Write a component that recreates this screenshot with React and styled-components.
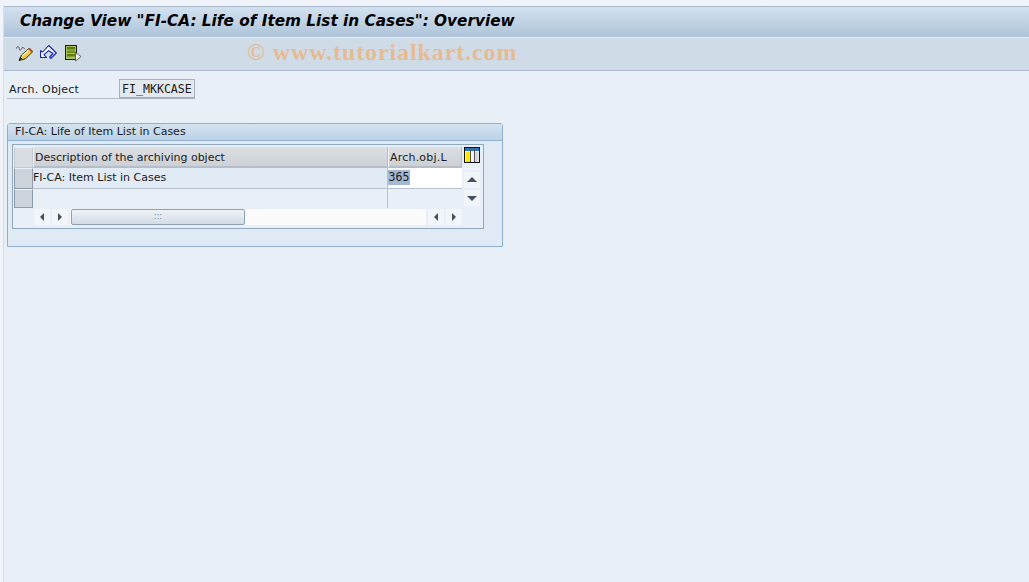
import React from "react"
import styled, { createGlobalStyle } from "styled-components"

const GlobalStyle = createGlobalStyle`
  html, body {
    margin: 0;
    padding: 0;
    height: 100%;
    overflow: hidden;
    background: #f0f4fa;
  }
  #root {
    height: 100%;
  }
`

function PencilIcon() {
  return (
    <svg width="18" height="18" viewBox="0 0 18 18">
      <path d="M0.500 4.500c0-2 2-2.500 2.500-1s0 3 1.500 2.500 1-3 2.500-2.500 1 1.500 2 1" fill="none" stroke="#555" strokeWidth="1" />
      <path d="M3 16.500l2.500-5.500 7.500-6.500 3.500 3.500-7.500 7z" fill="#f4cb3a" stroke="#2a2a2a" strokeWidth="1" strokeLinejoin="round" />
      <path d="M6.500 11.500l6.500-5.500" stroke="#fff3b0" strokeWidth="1.200" />
      <path d="M13 4.500l3.500 3.500" stroke="#c8451c" strokeWidth="2" />
      <path d="M3 16.500l1-3.500 2.500 2z" fill="#222" />
    </svg>
  )
}

function UndoIcon() {
  return (
    <svg width="18" height="18" viewBox="0 0 18 18">
      <path
        d="M0.500 6.700V13.500H6.500L4 10.700 8.700 6.700 13 9.500 9.700 13 10.700 14.500 16.300 9 8.700 1.500 2.700 8z"
        fill="#f6f8ff"
        stroke="#1420b0"
        strokeWidth="1.100"
        strokeLinejoin="round"
      />
    </svg>
  )
}

function ListIcon() {
  return (
    <svg width="18" height="18" viewBox="0 0 18 18">
      <rect x="1.500" y="1.500" width="11" height="14" fill="#a9bf60" stroke="#1c1c1c" />
      <rect x="3" y="3" width="8" height="2.500" fill="#5f7f0c" />
      <rect x="3" y="6.500" width="8" height="2.500" fill="#6f8f14" />
      <rect x="3" y="10" width="8" height="2.500" fill="#5f7f0c" />
      <path d="M11.500 8.500v8.500l5.500-4.500z" fill="#fff" stroke="#444" strokeWidth="0.800" />
    </svg>
  )
}

function ColumnsIcon() {
  return (
    <svg width="16" height="16" viewBox="0 0 16 16">
      <rect x="0.500" y="0.500" width="15" height="15" fill="#eee" stroke="#111" />
      <rect x="1" y="1" width="14" height="3" fill="#1f78c8" />
      <rect x="2" y="5" width="4" height="10" fill="#ffe800" />
      <rect x="7" y="5" width="3" height="10" fill="#f4f4f4" />
      <rect x="11" y="5" width="3" height="10" fill="#d8d8d8" />
      <path d="M6.500 1v14M10.500 1v14" stroke="#555" strokeWidth="1" />
    </svg>
  )
}

function Arrow({ dir }) {
  const points = {
    left: "7,1 7,9 3,5",
    right: "3,1 3,9 7,5",
    up: "0,7 10,7 5,2",
    down: "0,3 10,3 5,8",
  }
  return (
    <svg width="10" height="10" viewBox="0 0 10 10">
      <polygon points={points[dir]} fill="#465160" />
    </svg>
  )
}

export default function App() {
  return (
    <>
      <GlobalStyle />
      <S_Page>
        <S_Window>
          <S_TitleBar>
            <S_Title>Change View "FI-CA: Life of Item List in Cases": Overview</S_Title>
          </S_TitleBar>
          <S_Toolbar>
            <S_ToolButton>
              <PencilIcon />
            </S_ToolButton>
            <S_ToolButton>
              <UndoIcon />
            </S_ToolButton>
            <S_ToolButton>
              <ListIcon />
            </S_ToolButton>
            <S_Watermark>© www.tutorialkart.com</S_Watermark>
          </S_Toolbar>
          <S_Content>
            <S_FieldRow>
              <S_FieldLabel>Arch. Object</S_FieldLabel>
              <S_FieldValue>FI_MKKCASE</S_FieldValue>
            </S_FieldRow>
            <S_Panel>
              <S_PanelHeader>FI-CA: Life of Item List in Cases</S_PanelHeader>
              <S_TableFrame>
                <S_Grid>
                  <S_Selector $head />
                  <S_HeadCell>Description of the archiving object</S_HeadCell>
                  <S_HeadCell $wide>Arch.obj.L</S_HeadCell>
                  <S_ColumnButton>
                    <ColumnsIcon />
                  </S_ColumnButton>

                  <S_Selector />
                  <S_Cell>FI-CA: Item List in Cases</S_Cell>
                  <S_InputCell>
                    <S_Selected>365</S_Selected>
                  </S_InputCell>
                  <S_VBar>
                    <S_VNotch />
                    <S_ScrollButton>
                      <Arrow dir="up" />
                    </S_ScrollButton>
                    <S_ScrollButton>
                      <Arrow dir="down" />
                    </S_ScrollButton>
                  </S_VBar>

                  <S_Selector />
                  <S_EmptyCell $divider />
                  <S_EmptyCell />
                </S_Grid>
                <S_HBar>
                  <S_ScrollButton>
                    <Arrow dir="left" />
                  </S_ScrollButton>
                  <S_ScrollButton>
                    <Arrow dir="right" />
                  </S_ScrollButton>
                  <S_Track>
                    <S_Thumb>:::</S_Thumb>
                  </S_Track>
                  <S_ScrollButton>
                    <Arrow dir="left" />
                  </S_ScrollButton>
                  <S_ScrollButton>
                    <Arrow dir="right" />
                  </S_ScrollButton>
                </S_HBar>
              </S_TableFrame>
            </S_Panel>
          </S_Content>
        </S_Window>
      </S_Page>
    </>
  )
}

// STYLE
const S_Page = styled.div`
  height: 100%;
  padding: 6px 0 0 3px;
  box-sizing: border-box;
  font-family: "DejaVu Sans", sans-serif;
  font-size: 11px;
  color: #1a1a1a;
`

const S_Window = styled.div`
  height: 100%;
  display: flex;
  flex-direction: column;
  background: #e8eff7;
  border-left: 1px solid #d5dfeb;
`

const S_TitleBar = styled.div`
  height: 31px;
  box-sizing: border-box;
  padding: 0 0 3px 16px;
  display: flex;
  align-items: center;
  border-top: 1px solid #a9b9d0;
  background: linear-gradient(#d3e1ef, #aec4da);
`

const S_Title = styled.h1`
  margin: 0;
  font-family: "DejaVu Sans", sans-serif;
  font-size: 15.300px;
  font-weight: 700;
  font-style: italic;
  color: #000;
  white-space: nowrap;
`

const S_Toolbar = styled.div`
  position: relative;
  height: 34px;
  box-sizing: border-box;
  padding: 0 0 3px 12px;
  display: flex;
  align-items: center;
  gap: 6px;
  background: #cfdce8;
  border-top: 1px solid #e6eef6;
  border-bottom: 1px solid #a9b9cf;
`

const S_ToolButton = styled.div`
  width: 18px;
  height: 18px;
  display: flex;
`

const S_Watermark = styled.div`
  position: absolute;
  left: 243px;
  top: 1px;
  font-family: "Liberation Serif", serif;
  font-size: 24px;
  font-weight: 700;
  letter-spacing: 0.9px;
  color: #e6bb92;
  white-space: nowrap;
`

const S_Content = styled.div`
  flex: 1;
  padding: 8px 0 0 3px;
`

const S_FieldRow = styled.div`
  display: flex;
  align-items: flex-start;
  height: 20px;
`

const S_FieldLabel = styled.div`
  width: 112px;
  height: 20px;
  box-sizing: border-box;
  padding: 4px 0 0 2px;
  font-size: 11px;
  letter-spacing: 0.2px;
  border-bottom: 1px solid #b5bec8;
`

const S_FieldValue = styled.div`
  width: 76px;
  height: 20px;
  box-sizing: border-box;
  padding-left: 2px;
  line-height: 18px;
  font-family: "DejaVu Sans Mono", monospace;
  font-size: 11.600px;
  background: #e4e9ef;
  border: 1px solid #a8b2bc;
  border-bottom-width: 2px;
`

const S_Panel = styled.section`
  width: 496px;
  height: 124px;
  box-sizing: border-box;
  margin-top: 24px;
  border: 1px solid #8fb0d0;
  border-radius: 3px 3px 0 0;
  background: #dfeaf5;
`

const S_PanelHeader = styled.div`
  height: 16px;
  padding-left: 7px;
  line-height: 16px;
  font-size: 11px;
  background: linear-gradient(#d5e3f1, #bcd2e7);
  border-bottom: 1px solid #8fb0d0;
`

const S_TableFrame = styled.div`
  width: 472px;
  height: 85px;
  box-sizing: border-box;
  margin: 3px 0 0 4px;
  padding: 2px 2px 0 1px;
  background: #e8eff7;
  border: 1px solid #92a8bf;
`

const S_Grid = styled.div`
  display: grid;
  grid-template-columns: 19px 355px 74px 19px;
  grid-template-rows: 21px 21px 19px;
`

const S_Selector = styled.div`
  box-sizing: border-box;
  background: ${(p) => (p.$head ? "#d8dde3" : "#ccd3db")};
  border: 1px solid ${(p) => (p.$head ? "#c2c9d1" : "#8f9ba8")};
  border-top-color: #eef1f5;
`

const S_HeadCell = styled.div`
  box-sizing: border-box;
  padding: 4px 0 0 1px;
  font-size: 11px;
  letter-spacing: ${(p) => (p.$wide ? "0.2px" : "0")};
  background: linear-gradient(#dcdfe3, #cdd1d6);
  border-left: 1px solid #eef1f5;
  border-right: 1px solid #b5bec8;
  border-bottom: 2px solid #b5bec8;
`

const S_ColumnButton = styled.div`
  padding: 0 0 0 2px;
`

const S_Cell = styled.div`
  box-sizing: border-box;
  padding: 3px 0 0 0;
  font-size: 11px;
  background: #e0ebf5;
  border-right: 1px solid #b8c3cf;
  border-bottom: 1px solid #b8c3cf;
`

const S_EmptyCell = styled.div`
  background: #e8eff7;
  border-right: ${(p) => (p.$divider ? "1px solid #b8c3cf" : "0")};
`

const S_InputCell = styled.div`
  box-sizing: border-box;
  padding: 2px 0 0 0;
  background: #fff;
  border-bottom: 1px solid #b8c3cf;
`

const S_Selected = styled.span`
  display: inline-block;
  padding: 0 0.500px;
  height: 15px;
  line-height: 15px;
  font-family: "DejaVu Sans Mono", monospace;
  font-size: 11.600px;
  background: #a3b9d3;
`

const S_VBar = styled.div`
  grid-row: span 2;
  padding-left: 2px;
  display: flex;
  flex-direction: column;
  gap: 2px;
`

const S_VNotch = styled.div`
  width: 16px;
  height: 2px;
  background: #f2f5f9;
`

const S_ScrollButton = styled.div`
  width: 16px;
  height: 16px;
  flex: none;
  display: flex;
  align-items: center;
  justify-content: center;
  background: #f2f5f9;
`

const S_HBar = styled.div`
  display: flex;
  gap: 2px;
  width: 428px;
  height: 16px;
  margin: 1px 0 0 20px;
`

const S_Track = styled.div`
  flex: 1;
  padding-left: 1px;
  background: #fbfbfb;
`

const S_Thumb = styled.div`
  width: 174px;
  height: 16px;
  box-sizing: border-box;
  text-align: center;
  line-height: 13px;
  font-size: 8px;
  color: #7d8a98;
  background: linear-gradient(#eef2f6, #d3dce6);
  border: 1px solid #8fa0b2;
  border-radius: 2px;
`
